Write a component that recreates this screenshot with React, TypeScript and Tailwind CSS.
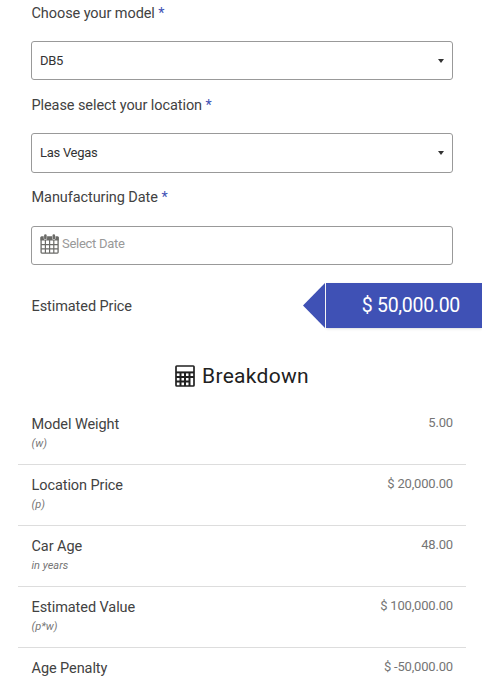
import type { ReactNode } from "react";

interface Row {
  label: string;
  hint?: string;
  value: string;
}

const rows: Row[] = [
  { label: "Model Weight", hint: "(w)", value: "5.00" },
  { label: "Location Price", hint: "(p)", value: "$ 20,000.00" },
  { label: "Car Age", hint: "in years", value: "48.00" },
  { label: "Estimated Value", hint: "(p*w)", value: "$ 100,000.00" },
  { label: "Age Penalty", value: "$ -50,000.00" },
];

function CalendarIcon() {
  return (
    <svg className="h-5 w-[19px] shrink-0" viewBox="0 0 19 20" fill="none" stroke="#6b6b68">
      <rect x="1.1" y="3.2" width="17" height="15.9" rx="0.8" strokeWidth="1.3" />
      <path d="M0.5 3.4q0-1 1-1h16.2q1 0 1 1V6.6H0.5z" fill="#6b6b68" stroke="none" />
      <path d="M5.4 6v13M9.6 6v13M13.8 6v13M1 10.6h17M1 14.8h17" strokeWidth="1.2" />
      <path d="M5.4 1.9v2.4M13.8 1.9v2.4" stroke="#fff" strokeWidth="3.4" strokeLinecap="round" />
      <path d="M5.4 1.6v2.6M13.8 1.6v2.6" strokeWidth="2.6" strokeLinecap="round" />
    </svg>
  );
}

function CalculatorIcon() {
  return (
    <svg className="h-[22px] w-5 shrink-0" viewBox="0 0 20 22" fill="none" stroke="#212121">
      <rect x="1" y="1" width="18" height="20" rx="0.8" strokeWidth="1.7" />
      <path d="M1 7.4h18" strokeWidth="2" />
      <path d="M1 12h18M1 16.4h13.5M5.5 7v14M10 7v14M14.5 7v14" strokeWidth="2" />
    </svg>
  );
}

function Label({ children }: { children: ReactNode }) {
  return (
    <label className="block h-5 pt-px pl-[0.5px] text-[14.5px] leading-5 tracking-[-0.08px] text-[#424242]">
      {children} <span className="text-[#3f51b5]">*</span>
    </label>
  );
}

function Select({ value, className }: { value: string; className: string }) {
  return (
    <div
      className={`flex items-center justify-between rounded-[3px] border border-[#999] pr-2 pl-2 text-[13px] tracking-[-0.28px] text-[#333] ${className}`}
    >
      <span>{value}</span>
      <svg className="h-1 w-[6px]" viewBox="0 0 6 4" fill="#333">
        <path d="M0 0h6L3 4z" />
      </svg>
    </div>
  );
}

export default function App() {
  return (
    <div className="h-[683px] w-[482px] overflow-hidden bg-white pt-[3px] font-['Roboto',sans-serif]">
      <div className="pr-[29px] pl-[31px]">
        <Label>Choose your model</Label>
        <Select value="DB5" className="mt-[18px] h-[39px]" />
        <div className="mt-[15px]">
          <Label>Please select your location</Label>
        </div>
        <Select value="Las Vegas" className="mt-[18px] h-10" />
        <div className="mt-[14px]">
          <Label>Manufacturing Date</Label>
        </div>
        <div className="mt-[19px] flex h-[39px] items-center gap-[3px] rounded-[3px] border border-[#999] px-2 pb-[3px] text-[13px] tracking-[-0.28px] text-[#999]">
          <CalendarIcon />
          <span>Select Date</span>
        </div>
      </div>

      {/* Estimated price */}
      <div className="mt-[18px] flex h-[45px] items-center justify-between pl-[31.5px]">
        <span className="pt-[2px] text-[14.5px] leading-5 tracking-[-0.08px] text-[#424242]">Estimated Price</span>
        <div className="flex h-full">
          <svg className="h-[45px] w-[22px]" viewBox="0 0 22 45" fill="#3f51b5">
            <path d="M22 0v45L0 22.5z" />
          </svg>
          <div className="ml-px flex w-[156px] items-center justify-end bg-[#3f51b5] pr-[22px] text-[19.5px] tracking-[-0.3px] text-white shadow">
            $ 50,000.00
          </div>
        </div>
      </div>

      {/* Breakdown */}
      <div className="mt-9 flex h-6 items-center justify-center gap-[7px] pl-[2px]">
        <CalculatorIcon />
        <h2 className="text-[21px] leading-6 tracking-[0.3px] text-[#212121]">Breakdown</h2>
      </div>
      <div className="mt-4 mr-4 ml-[18px]">
        {rows.map((row) => (
          <div key={row.label} className="flex h-[61px] justify-between border-b border-[#ddd] pr-[13px] pl-[13.5px]">
            <div className="pt-[11px]">
              <div className="text-[14.5px] leading-5 tracking-[-0.08px] text-[#424242]">{row.label}</div>
              {row.hint && <div className="mt-px text-[11px] leading-4 text-[#757575] italic">{row.hint}</div>}
            </div>
            <div className="pt-[9px] text-[13px] leading-5 tracking-[-0.18px] text-[#757575]">{row.value}</div>
          </div>
        ))}
      </div>
    </div>
  );
}
